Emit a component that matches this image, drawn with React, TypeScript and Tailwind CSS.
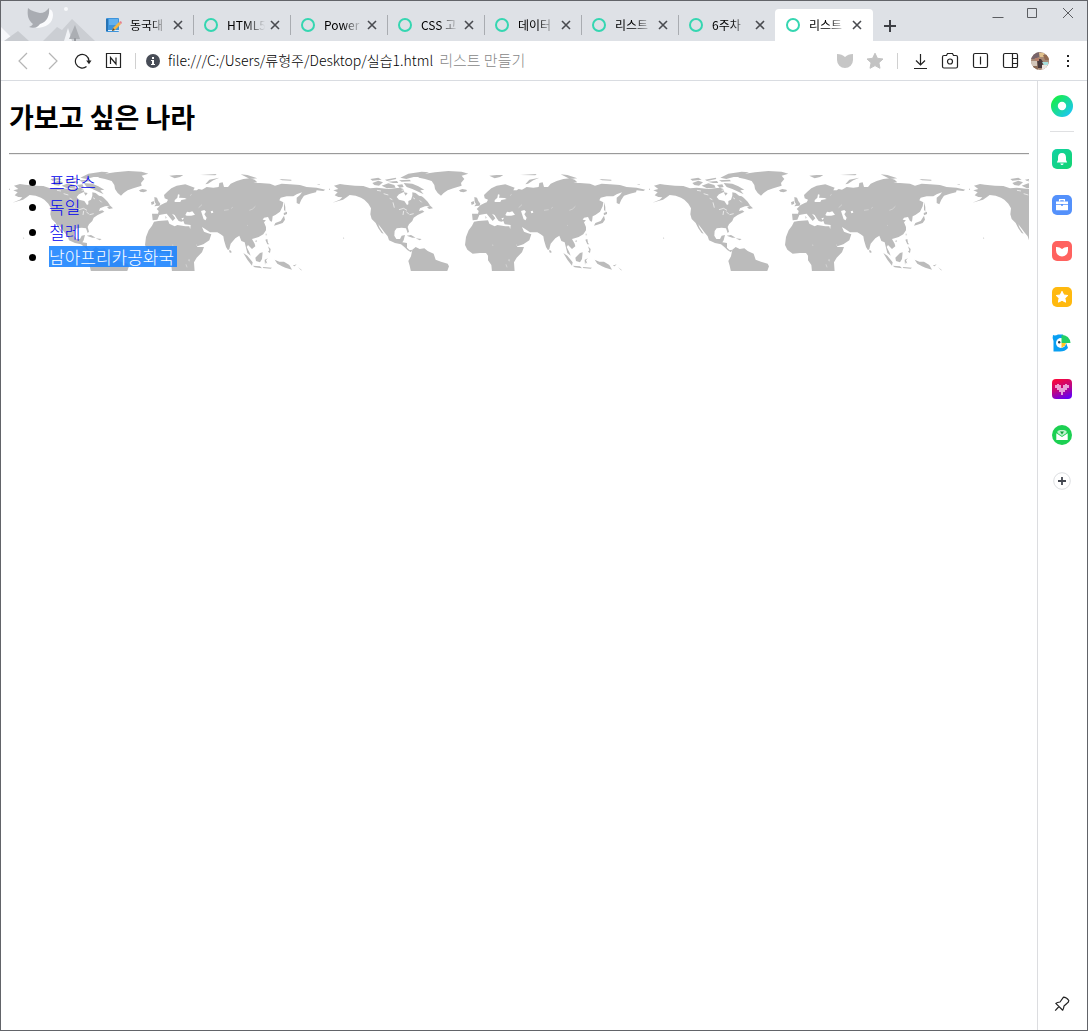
import type { ReactNode } from "react";

const tabs = [
  { title: "동국대", note: true },
  { title: "HTML5" },
  { title: "Power" },
  { title: "CSS 고" },
  { title: "데이터" },
  { title: "리스트" },
  { title: "6주차" },
  { title: "리스트", active: true },
];

const countries = ["프랑스", "독일", "칠레", "남아프리카공화국"];

function IconButton({ label, className, children }: { label: string; className: string; children: ReactNode }) {
  return (
    <button type="button" aria-label={label} className={`flex shrink-0 items-center justify-center ${className}`}>
      {children}
    </button>
  );
}

function Mascot() {
  return (
    <svg className="h-10 w-[95px] shrink-0" viewBox="1 1 95 40" aria-hidden="true">
      <path d="M1 27 L15 41 H1Z" fill="#f7f8fb" />
      <path d="M4 41 L18 31 L29 41Z" fill="#c8cbd0" />
      <path d="M43 41 L57 27 L62 30 L72 19 L95 41Z" fill="#cbced3" />
      <path d="M64 41 L68 28 L72 41Z" fill="#f1f3f6" />
      <path d="M69 39 L75 25 L80 39Z" fill="#abaeb3" />
      <path d="M74 38h2v3h-2z" fill="#989ba0" />
      <circle cx="66" cy="9" r="2" fill="#f7f8fb" />
      <path d="M48 9 Q53 9 53 15 C53 23 46 28 36 28 Q38 26 39 24 C42 15 43 13 48 9Z" fill="#fafbfd" />
      <path d="M28 8 C31 11 36 12 40 13 C44 13 46 11 49 8 C50 15 47 22 40 24 C38 27 34 29 29 27 Q32 26 33 24 C28 20 27 15 28 8Z" fill="#a9acb2" />
    </svg>
  );
}

function NoteIcon() {
  return (
    <svg width="16" height="16" viewBox="0 0 16 16" aria-hidden="true">
      <rect x="0" y="1" width="13" height="14" rx="1" fill="#3d94dc" />
      <path d="M0 2h2v12H0z" fill="#2672b4" />
      <path d="M3 2h9v6H3z" fill="#62b0ee" />
      <path d="M2 13h11v1H2z" fill="#dceefc" />
      <path d="M6 14 L7 11 L13 5 L15 7 L9 13Z" fill="#f2b544" />
      <path d="M13 5 L15 4 L16 6 L15 7Z" fill="#e77f8d" />
      <path d="M6 14 L7 11 L9 13Z" fill="#54473b" />
    </svg>
  );
}

function Tab({ title, note, active, divider }: { title: string; note?: boolean; active?: boolean; divider: boolean }) {
  return (
    <div className={active ? "flex h-8 w-[98px] shrink-0 items-center rounded-t bg-white" : "relative flex h-8 w-[97px] shrink-0 items-center"}>
      <button type="button" role="tab" aria-selected={!!active} className="flex h-full items-center pl-2">
        <span className="flex w-5 justify-center">
          {note ? <NoteIcon /> : (
            <svg width="16" height="16" viewBox="0 0 16 16" aria-hidden="true">
              <circle cx="8" cy="8" r="6" fill="none" stroke="#35d6b1" strokeWidth="2" />
            </svg>
          )}
        </span>
        <span className="ml-[6px] w-[38px] whitespace-nowrap text-left text-[12px] [mask-image:linear-gradient(to_right,black_50%,transparent)]">
          {title}
        </span>
      </button>
      <IconButton label={`${title} 탭 닫기`} className="h-5 w-5">
        <svg width="10" height="10" viewBox="0 0 10 10" aria-hidden="true">
          <path d="M1 1 L9 9 M9 1 L1 9" stroke="#494b50" strokeWidth="1.6" />
        </svg>
      </IconButton>
      {divider && <span className="absolute -right-px top-[6px] h-5 w-px bg-[#a9acb1]" />}
    </div>
  );
}

function TabBar() {
  return (
    <header className="flex h-10 items-end bg-[#dee1e6]">
      <Mascot />
      <div role="tablist" className="flex">
        {tabs.map((tab, i) => (
          <Tab key={i} {...tab} divider={i < tabs.length - 2} />
        ))}
      </div>
      <IconButton label="새 탭" className="h-[30px] w-[34px]">
        <svg width="12" height="12" viewBox="0 0 12 12" aria-hidden="true">
          <path d="M6 0v12M0 6h12" stroke="#3d3f44" strokeWidth="2" />
        </svg>
      </IconButton>
      <div className="ml-auto flex self-start text-[#5b5d61]">
        <IconButton label="최소화" className="h-6 w-[34px]">
          <svg width="12" height="12" viewBox="0 0 12 12" aria-hidden="true"><path d="M.5 10.5h11" stroke="currentColor" /></svg>
        </IconButton>
        <IconButton label="최대화" className="h-6 w-[34px]">
          <svg width="10" height="10" viewBox="0 0 10 10" aria-hidden="true"><path d="M.5 .5h9v9h-9z" fill="none" stroke="currentColor" /></svg>
        </IconButton>
        <IconButton label="닫기" className="h-6 w-[38px]">
          <svg width="10" height="10" viewBox="0 0 10 10" aria-hidden="true"><path d="M0 0 L10 10 M10 0 L0 10" stroke="currentColor" /></svg>
        </IconButton>
      </div>
    </header>
  );
}

function Line({ children, stroke = "#222" }: { children: ReactNode; stroke?: string }) {
  return (
    <svg width="18" height="18" viewBox="0 0 18 18" fill="none" stroke={stroke} strokeWidth="1.2" aria-hidden="true">
      {children}
    </svg>
  );
}

function Toolbar() {
  return (
    <div className="flex h-10 items-center border-b border-[#d9dce1] bg-white pl-[7px] pr-[6px]">
      <IconButton label="뒤로" className="h-8 w-[30px]"><Line stroke="#b5b5b5"><path d="M13 1 L5 9 L13 17" /></Line></IconButton>
      <IconButton label="앞으로" className="h-8 w-[30px]"><Line stroke="#b5b5b5"><path d="M5 1 L13 9 L5 17" /></Line></IconButton>
      <IconButton label="새로고침" className="h-8 w-[30px]">
        <Line>
          <path d="M12.5 14.5 A6.8 6.8 0 1 1 15 9" strokeWidth="1.2" />
          <path d="M12.2 8.5 H17.5 L15 12.2Z" fill="#222" stroke="none" />
        </Line>
      </IconButton>
      <IconButton label="네이버 홈" className="h-8 w-[30px]">
        <Line>
          <path d="M2.5 1.5h14v14h-14z" />
          <path d="M6.5 12V5.5L12 12V5.5" />
        </Line>
      </IconButton>
      <span className="ml-[7px] h-4 w-px bg-[#d0d0d0]" />
      <IconButton label="사이트 정보" className="ml-2 h-8 w-[18px]">
        <svg width="14" height="14" viewBox="0 0 14 14" aria-hidden="true">
          <circle cx="7" cy="7" r="7" fill="#484d57" />
          <path d="M6 3h2v2H6z M5 6h3v4h1v1H5v-1h1V7H5z" fill="white" />
        </svg>
      </IconButton>
      <label className="ml-[6px] flex min-w-0 flex-1 items-center pb-px text-[14px]">
        <input aria-label="주소" type="text" defaultValue="file:///C:/Users/류형주/Desktop/실습1.html" className="field-sizing-content bg-transparent font-light text-black outline-none" />
        <span className="ml-[6px] whitespace-nowrap text-[15px] font-light text-[#888]">리스트 만들기</span>
      </label>
      <IconButton label="보호" className="h-8 w-[30px]">
        <svg width="18" height="18" viewBox="0 0 18 18" aria-hidden="true"><path d="M1 2 Q6 2 9 5 Q12 2 17 2 V8 A8 8 0 0 1 1 8Z" fill="#c6c6c6" /></svg>
      </IconButton>
      <IconButton label="북마크" className="h-8 w-[30px]"><Star className="h-[18px] w-[18px] text-[#c3c3c3]" /></IconButton>
      <span className="mx-[7px] h-4 w-px bg-[#d0d0d0]" />
      <IconButton label="다운로드" className="h-8 w-[30px]"><Line><path d="M9.5 2v11M5 8.5L9.5 13l4.500-4.500M3 16.500h13" /></Line></IconButton>
      <IconButton label="캡처" className="h-8 w-[30px]">
        <Line><path d="M3 3.500h2.500l1-2h5l1 2H15q1.500 0 1.500 1.500v9.500q0 1.500-1.500 1.500H3q-1.500 0-1.500-1.500v-9.500Q1.500 3.500 3 3.500Z" /><circle cx="9" cy="9.500" r="2.500" /></Line>
      </IconButton>
      <IconButton label="듀얼 탭" className="h-8 w-[30px]"><Line><rect x="2.500" y="1.500" width="14" height="14" rx="1.500" /><path d="M9.500 4.500v8" /></Line></IconButton>
      <IconButton label="사이드바" className="h-8 w-[30px]"><Line><rect x="2.500" y="1.500" width="14" height="14" rx="1.500" /><path d="M11.500 1.500v14M11.500 6.500h5M11.500 11.500h5" /></Line></IconButton>
      <IconButton label="프로필" className="h-8 w-[30px]">
        <svg width="18" height="18" viewBox="0 0 18 18" aria-hidden="true">
          <clipPath id="avatar"><circle cx="9" cy="9" r="9" /></clipPath>
          <g clipPath="url(#avatar)">
            <path d="M0 0h18v18H0z" fill="#a88a76" />
            <path d="M0 0h8v5L3 7H0z" fill="#78646a" />
            <path d="M8 1h5v4H9z" fill="#dfc08c" />
            <path d="M12 3h6v5h-4z" fill="#936b51" />
            <path d="M0 9h6v5H0z" fill="#d3c6b9" />
            <path d="M6 7h4l2 3-1 6H7z" fill="#47383a" />
            <path d="M4 6h4v3H5z" fill="#b9806a" />
            <path d="M11 10h6v3h-4z" fill="#a7dfdd" />
            <path d="M11 13h5v5h-5z" fill="#eee5df" />
            <path d="M2 14h5v4H2z" fill="#8b6b56" />
          </g>
        </svg>
      </IconButton>
      <IconButton label="메뉴" className="h-8 w-[26px]">
        <svg width="4" height="14" viewBox="0 0 4 14" fill="#222" aria-hidden="true"><path d="M1 1h2v2H1zM1 6h2v2H1zM1 11h2v2H1z" /></svg>
      </IconButton>
    </div>
  );
}

function Star({ className }: { className: string }) {
  return (
    <svg className={className} viewBox="0 0 18 18" aria-hidden="true">
      <path d="M9 1.2 L11.4 6.3 L17 7 L12.9 10.8 L14 16.3 L9 13.6 L4 16.3 L5.1 10.8 L1 7 L6.6 6.3Z" fill="currentColor" stroke="currentColor" strokeLinejoin="round" />
    </svg>
  );
}

function AppIcon({ children, size = 20 }: { children: ReactNode; size?: number }) {
  return <svg width={size} height={size} viewBox="0 0 20 20" aria-hidden="true">{children}</svg>;
}

function Sidebar() {
  const slot = "h-[46px] w-full";
  return (
    <aside className="flex w-[50px] shrink-0 flex-col items-center border-l border-[#dcdde0] bg-white pr-px pt-[2px]">
      <IconButton label="웨일" className={slot}>
        <AppIcon size={22}>
          <linearGradient id="ring" x1="0" y1="0" x2="1" y2="1"><stop offset=".1" stopColor="#16f040" /><stop offset=".9" stopColor="#1cc5f8" /></linearGradient>
          <circle cx="10" cy="10" r="10" fill="url(#ring)" /><circle cx="10" cy="10" r="3.800" fill="white" />
        </AppIcon>
      </IconButton>
      <span className="mb-1 mt-[2px] h-px w-6 bg-[#dfe0e2]" />
      <IconButton label="알림" className={slot}>
        <AppIcon>
          <linearGradient id="bell" x1="0" y1="0" x2="1" y2="1"><stop stopColor="#12d2a5" /><stop offset="1" stopColor="#13d470" /></linearGradient>
          <rect width="20" height="20" rx="5" fill="url(#bell)" />
          <path d="M10 4 C12.8 4 14 6 14 8.5 V11 L15.2 13.4 H4.8 L6 11 V8.5 C6 6 7.2 4 10 4Z M8.3 14.4h3.4 Q11.2 16 10 16 T8.3 14.4Z" fill="white" />
        </AppIcon>
      </IconButton>
      <IconButton label="도구 모음" className={slot}>
        <AppIcon>
          <rect width="20" height="20" rx="5" fill="#5491fb" />
          <path d="M7.6 6.5V4.7h4.8v1.8" fill="none" stroke="white" strokeWidth="1.3" />
          <path d="M4 6.5h12v2.4H4z M4 9.8h5v1h2v-1h5v5q0 .5-.5.5h-11q-.5 0-.5-.5Z" fill="white" />
        </AppIcon>
      </IconButton>
      <IconButton label="스크랩북" className={slot}>
        <AppIcon>
          <rect width="20" height="20" rx="5" fill="#ff625f" />
          <path d="M4 6 Q7.5 5.7 10 8 Q12.5 5.7 16 6 V9.5 A6 6 0 0 1 4 9.5Z" fill="white" />
        </AppIcon>
      </IconButton>
      <IconButton label="북마크" className={slot}>
        <AppIcon>
          <rect width="20" height="20" rx="5" fill="#ffb90f" />
          <path d="M10 4.3 L11.8 8 L15.8 8.5 L12.9 11.2 L13.6 15.2 L10 13.3 L6.4 15.2 L7.1 11.2 L4.2 8.5 L8.2 8Z" fill="white" stroke="white" strokeLinejoin="round" />
        </AppIcon>
      </IconButton>
      <IconButton label="파파고" className={slot}>
        <AppIcon>
          <path d="M1 2 Q3 3 6 1.5 H11 L16 15 Q13 18.5 8 18.5 H1.5 V8 Q0 5 1 2Z" fill="#089ff2" />
          <circle cx="9" cy="10" r="5" fill="white" />
          <path d="M9.5 2 Q17.5 2 18.5 10 H9.5Z" fill="#22cf65" />
          <path d="M9.5 10 H14 L13 12.5 L9.5 15Z" fill="#ffc525" />
          <circle cx="7.2" cy="9.2" r="1.2" fill="#2f3b49" />
        </AppIcon>
      </IconButton>
      <IconButton label="바이브" className={slot}>
        <AppIcon>
          <linearGradient id="vibe" x1=".2" y1="0" x2=".6" y2="1"><stop stopColor="#fb0739" /><stop offset=".5" stopColor="#c3077b" /><stop offset="1" stopColor="#6800f0" /></linearGradient>
          <rect width="20" height="20" rx="4" fill="url(#vibe)" />
          <path d="M4 6v3M6 5v6M8 6v7M10 9v7M12 6v7M14 5v6M16 6v3" stroke="#f4c9ec" strokeWidth="1.600" />
        </AppIcon>
      </IconButton>
      <IconButton label="메일" className={slot}>
        <AppIcon>
          <circle cx="10" cy="10" r="10" fill="#1cd052" />
          <path d="M4.3 8.2 L10 12 L15.7 8.2 V15H4.3Z" fill="white" />
          <path d="M5.5 8 V6 L8 5 H12 L14.5 6 V8 L10 11Z" fill="#bff1ce" />
          <path d="M8 6.5h4L10 9.5Z" fill="#10a33b" />
        </AppIcon>
      </IconButton>
      <IconButton label="추가" className={slot}>
        <AppIcon>
          <circle cx="10" cy="10" r="8.3" fill="white" stroke="#dddfe2" />
          <path d="M10 6v8M6 10h8" stroke="#434750" strokeWidth="1.8" />
        </AppIcon>
      </IconButton>
      <IconButton label="고정" className="mb-[3px] mt-auto h-[46px] w-full">
        <svg width="16" height="16" viewBox="0 0 16 16" fill="none" stroke="#222" strokeWidth="1.2" strokeLinejoin="round" aria-hidden="true">
          <path d="M9.5 1.2 Q12.5 1.2 14.8 4.5 Q14.8 6.2 12.8 7.5 L10 10 Q9.8 12.5 8.7 14.2 L1.8 7.4 Q3.3 6.2 6 6 Z M5 10.5 L1.2 14.6" />
        </svg>
      </IconButton>
    </aside>
  );
}

function WorldMap() {
  return (
    <svg className="absolute inset-0 -z-10 h-full w-full" aria-hidden="true">
      <defs>
        <pattern id="world" width="320" height="104" patternUnits="userSpaceOnUse">
          <g transform="translate(-4 -4) scale(.33333)">
            <path
              fill="#bbb"
              d="M27 62L45 57 60 59 90 62 115 63 135 70 155 68 170 70 190 72 210 70 225 68 235 72 238 80 222 88 215 96 222 104 238 108 246 120 250 118 250 108 258 104 262 92 262 82 272 84 282 92 290 94 296 98 308 110 316 122 300 124 285 130 282 138 292 136 298 140 286 146 278 150 266 158 262 168 252 178 248 186 252 200 248 204 243 190 230 188 215 190 209 198 208 212 214 222 225 222 230 212 240 210 236 226 232 232 246 234 246 248 254 256 262 254 258 262 248 256 238 246 228 238 210 234 192 226 188 214 178 202 168 188 160 178 164 188 176 206 170 204 160 190 152 174 140 162 136 148 138 130 130 116 118 104 108 98 92 92 74 90 66 96 54 104 40 108 22 113 44 104 52 97 40 96 29 91 38 82 25 76 40 72Z
              M262 254L272 246 284 252 298 250 308 258 326 266 332 284 348 290 368 296 372 304 366 320 258 320 254 302 250 288 258 274Z
              M276 32L300 26 330 22 370 18 410 20 430 26 410 32 418 42 408 54 410 62 385 70 368 76 356 84 348 92 338 84 330 72 328 60 320 48 300 42 282 38Z
              M402 76L412 72 424 74 426 78 416 82 406 80Z
              M236 54L262 56 280 64 298 74 286 76 296 88 280 80 262 72 245 66Z
              M226 38L250 26 290 20 312 22 290 30 266 36 244 42Z
              M170 62L190 55 208 60 212 68 186 70Z M142 54L160 47 174 52 162 62 148 60Z M136 42L160 38 170 44 142 47Z
              M180 44L212 38 214 42 186 48Z M188 50L216 48 220 54 204 54Z M222 46L254 44 258 49 230 50Z M216 60L232 58 236 66 224 68Z M236 82L248 84 242 92Z
              M306 126L316 122 324 130 312 132Z M245 212L258 210 272 218 262 218Z M272 220L290 222 284 226Z M12 71h3v3h-3z M54 217l4 3-3 1z
              M448 96l8 2 4 10 6 8-2 6-16 2 5-7-4-6z M438 112l8-4 2 8-8 4z"
            />
            <path fill="none" stroke="white" strokeWidth="2" d="M222 134l14-4 10 6M236 138l-2 12M244 140l8 8M254 149l12-3M204 112l4 16M176 86l14 4M156 76l12 2M194 100l8 4M240 74l-10 2M284 106l6 6M264 98l6 4" />
          </g>
          <g transform="translate(151 -4) scale(.33333)">
            <path
              fill="#bbb"
              d="M-24 146L-6 146-4 138-10 132 2 120 14 114 20 112 24 104 14 100 12 90 22 80 34 70 50 62 76 58 90 63 104 68 100 76 110 76 116 72 126 74 140 66 160 68 176 66 178 54 188 52 192 66 204 66 212 56 230 48 250 42 270 40 284 44 292 52 280 54 300 54 330 56 345 62 365 56 390 58 420 60 440 66 470 68 496 74 490 78 470 76 468 82 450 86 432 92 424 104 418 118 410 114 410 98 420 90 426 82 410 88 400 94 380 94 362 98 358 106 370 112 368 124 360 140 346 150 338 154 336 170 330 168 324 156 312 158 308 164 318 166 312 172 318 186 318 196 310 208 296 216 284 220 276 222 284 236 286 244 276 252 270 246 264 240 260 246 268 262 272 272 262 264 258 248 254 232 244 228 238 212 226 220 212 236 208 252 204 256 198 246 192 226 190 214 182 208 172 202 150 202 132 190 126 186 132 200 142 204 154 208 148 226 130 238 112 244 106 232 96 212 90 196 92 180 74 178 70 168 64 170 56 168 50 160 44 150 36 146 46 160 38 168 28 156 20 146 10 148-2 150-8 164-22 166Z
              M-18 170L-5 168 24 166 28 176 44 184 52 180 76 184 88 184 94 204 104 226 112 246 132 246 126 262 110 278 102 292 104 320 36 320 34 300 24 286 24 272 18 264 0 264-22 266-38 254-45 240-42 216-34 196-24 182Z
              M372 152L375 164 368 174 350 180 342 182 346 174 362 168Z M371 144l10-4 0 7-9 4z M372 112l4 14 0 14-4-6z M317 206l3 0-2 8z M285 228l6-2-2 6z
              M316 224l6-2 2 12 4 4-6 0z M324 244l8 8-2 12-6-4 4-4z M250 264L262 272 278 292 276 302 262 284Z M278 302L300 304 306 310 284 307Z M286 278L300 264 308 262 306 282 300 292 288 288Z
              M314 284l10-4-6 6 4 10-5-4-2 8z M310 306l26 2-4 3-24-2z M344 284L358 290 372 290 388 300 396 314 376 308 366 304 352 296Z M398 302l12-4-6 6z M414 306l12 10-3 0z
              M136 58L148 44 178 38 160 46 144 56Z M28 32L50 30 70 30 60 36 44 40Z M120 30l50-3-4 4z M242 28L262 30 292 40 270 42Z M358 42l36 2 0 3-28-1z M470 58l10 0-2 2z
              M208 254l6 4 0 6-6-2z M16 152l4 6-3 3z"
            />
            <path fill="white" d="M76 150L81 140 88 142 97 139 105 149 94 152 80 152Z M123 138L133 135 138 140 133 148 140 158 137 166 131 163Z M152 139l6-2 2 6-6 2z M44 106L52 98 54 88 59 89 57 98 74 99 80 102 64 105 61 111 44 111Z M64 160l8-2-4 7z" />
            <path fill="none" stroke="white" strokeWidth="1" d="M268 136l10-4 8-8M192 136l14-2M214 130l4-3M262 181l2 1M36 240l4 1M84 286l4-2 0 5M78 298l3 9M116 128l10-9M90 92l5-4" />
          </g>
        </pattern>
      </defs>
      <rect width="100%" height="100%" fill="url(#world)" />
    </svg>
  );
}

export default function App() {
  return (
    <div className="flex min-h-screen flex-col border border-[#626469] bg-white font-['Noto_Sans_CJK_KR','Noto_Sans',sans-serif] text-black">
      <TabBar />
      <Toolbar />
      <div className="flex flex-1">
        <main className="min-w-0 flex-1 px-2 pt-4">
          <h1 className="text-[27px] font-bold leading-10">가보고 싶은 나라</h1>
          <hr className="mb-[14px] mt-4 border-b border-t border-b-[#eee] border-t-[#9a9a9a]" />
          <ul className="relative isolate list-disc pb-[2px] pl-10 text-[17px] font-light leading-[25px]">
            <WorldMap />
            {countries.map((country, i) => (
              <li key={country}>
                <a href="#" className={i === 3 ? "mt-[2px] inline-block h-[21px] bg-[#1e85ff]/90 pr-[3px] align-top leading-[21px] text-white" : "text-[#0000ee]"}>
                  {country}
                </a>
              </li>
            ))}
          </ul>
        </main>
        <Sidebar />
      </div>
    </div>
  );
}
